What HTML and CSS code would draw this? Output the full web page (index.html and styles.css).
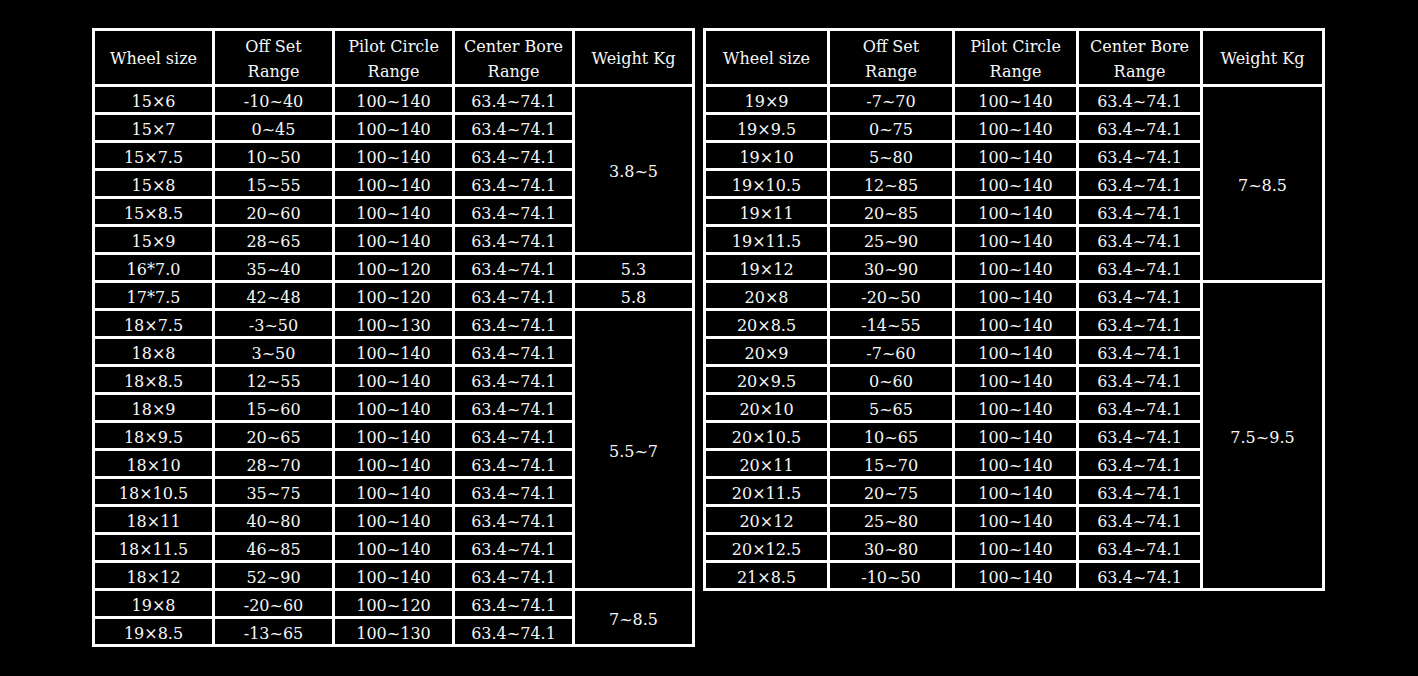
FILE: index.html
```html
<!DOCTYPE html>
<html>
<head>
<meta charset="utf-8">
<link rel="stylesheet" href="styles.css">
</head>
<body>
<div class="page">
  <table class="spec left">
    <tr class="head">
      <th class="c1">Wheel size</th>
      <th class="c2">Off Set<br>Range</th>
      <th class="c3">Pilot Circle<br>Range</th>
      <th class="c4">Center Bore<br>Range</th>
      <th class="c5">Weight Kg</th>
    </tr>
    <tr><td>15×6</td><td>-10~40</td><td>100~140</td><td>63.4~74.1</td><td rowspan="6">3.8~5</td></tr>
    <tr><td>15×7</td><td>0~45</td><td>100~140</td><td>63.4~74.1</td></tr>
    <tr><td>15×7.5</td><td>10~50</td><td>100~140</td><td>63.4~74.1</td></tr>
    <tr><td>15×8</td><td>15~55</td><td>100~140</td><td>63.4~74.1</td></tr>
    <tr><td>15×8.5</td><td>20~60</td><td>100~140</td><td>63.4~74.1</td></tr>
    <tr><td>15×9</td><td>28~65</td><td>100~140</td><td>63.4~74.1</td></tr>
    <tr><td>16*7.0</td><td>35~40</td><td>100~120</td><td>63.4~74.1</td><td>5.3</td></tr>
    <tr><td>17*7.5</td><td>42~48</td><td>100~120</td><td>63.4~74.1</td><td>5.8</td></tr>
    <tr><td>18×7.5</td><td>-3~50</td><td>100~130</td><td>63.4~74.1</td><td rowspan="10">5.5~7</td></tr>
    <tr><td>18×8</td><td>3~50</td><td>100~140</td><td>63.4~74.1</td></tr>
    <tr><td>18×8.5</td><td>12~55</td><td>100~140</td><td>63.4~74.1</td></tr>
    <tr><td>18×9</td><td>15~60</td><td>100~140</td><td>63.4~74.1</td></tr>
    <tr><td>18×9.5</td><td>20~65</td><td>100~140</td><td>63.4~74.1</td></tr>
    <tr><td>18×10</td><td>28~70</td><td>100~140</td><td>63.4~74.1</td></tr>
    <tr><td>18×10.5</td><td>35~75</td><td>100~140</td><td>63.4~74.1</td></tr>
    <tr><td>18×11</td><td>40~80</td><td>100~140</td><td>63.4~74.1</td></tr>
    <tr><td>18×11.5</td><td>46~85</td><td>100~140</td><td>63.4~74.1</td></tr>
    <tr><td>18×12</td><td>52~90</td><td>100~140</td><td>63.4~74.1</td></tr>
    <tr><td>19×8</td><td>-20~60</td><td>100~120</td><td>63.4~74.1</td><td rowspan="2">7~8.5</td></tr>
    <tr><td>19×8.5</td><td>-13~65</td><td>100~130</td><td>63.4~74.1</td></tr>
  </table>
  <table class="spec right">
    <tr class="head">
      <th class="d1">Wheel size</th>
      <th class="d2">Off Set<br>Range</th>
      <th class="d3">Pilot Circle<br>Range</th>
      <th class="d4">Center Bore<br>Range</th>
      <th class="d5">Weight Kg</th>
    </tr>
    <tr><td>19×9</td><td>-7~70</td><td>100~140</td><td>63.4~74.1</td><td rowspan="7">7~8.5</td></tr>
    <tr><td>19×9.5</td><td>0~75</td><td>100~140</td><td>63.4~74.1</td></tr>
    <tr><td>19×10</td><td>5~80</td><td>100~140</td><td>63.4~74.1</td></tr>
    <tr><td>19×10.5</td><td>12~85</td><td>100~140</td><td>63.4~74.1</td></tr>
    <tr><td>19×11</td><td>20~85</td><td>100~140</td><td>63.4~74.1</td></tr>
    <tr><td>19×11.5</td><td>25~90</td><td>100~140</td><td>63.4~74.1</td></tr>
    <tr><td>19×12</td><td>30~90</td><td>100~140</td><td>63.4~74.1</td></tr>
    <tr><td>20×8</td><td>-20~50</td><td>100~140</td><td>63.4~74.1</td><td rowspan="11">7.5~9.5</td></tr>
    <tr><td>20×8.5</td><td>-14~55</td><td>100~140</td><td>63.4~74.1</td></tr>
    <tr><td>20×9</td><td>-7~60</td><td>100~140</td><td>63.4~74.1</td></tr>
    <tr><td>20×9.5</td><td>0~60</td><td>100~140</td><td>63.4~74.1</td></tr>
    <tr><td>20×10</td><td>5~65</td><td>100~140</td><td>63.4~74.1</td></tr>
    <tr><td>20×10.5</td><td>10~65</td><td>100~140</td><td>63.4~74.1</td></tr>
    <tr><td>20×11</td><td>15~70</td><td>100~140</td><td>63.4~74.1</td></tr>
    <tr><td>20×11.5</td><td>20~75</td><td>100~140</td><td>63.4~74.1</td></tr>
    <tr><td>20×12</td><td>25~80</td><td>100~140</td><td>63.4~74.1</td></tr>
    <tr><td>20×12.5</td><td>30~80</td><td>100~140</td><td>63.4~74.1</td></tr>
    <tr><td>21×8.5</td><td>-10~50</td><td>100~140</td><td>63.4~74.1</td></tr>
  </table>
</div>
</body>
</html>
```
FILE: styles.css
```css
html, body {
  margin: 0;
  padding: 0;
  background: #000;
}
.page {
  display: flex;
  align-items: flex-start;
  gap: 8px;
  padding: 28px 0 0 92px;
  height: 676px;
  box-sizing: border-box;
}
.spec {
  border-collapse: separate;
  border-spacing: 0;
  table-layout: fixed;
  border-left: 3px solid #fff;
  border-top: 3px solid #fff;
  background: #000;
  color: #f6f6f6;
  font-family: "DejaVu Serif", serif;
  font-size: 16px;
}
.spec th, .spec td {
  box-sizing: border-box;
  border-right: 3px solid #fff;
  border-bottom: 3px solid #fff;
  padding: 0;
  text-align: center;
  vertical-align: middle;
  font-weight: normal;
  white-space: nowrap;
}
.spec th {
  height: 56px;
  padding-top: 2px;
  line-height: 25px;
}
.spec td {
  height: 28px;
  padding-top: 4px;
  line-height: 21px;
}
.left { width: 603px; }
.left th { width: 120px; }
.right { width: 622px; }
.d1 { width: 124px; }
.d2 { width: 125px; }
.d3 { width: 124px; }
.d4 { width: 124px; }
.d5 { width: 122px; }
```
